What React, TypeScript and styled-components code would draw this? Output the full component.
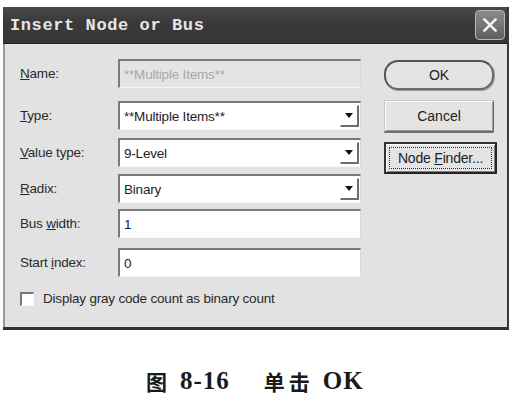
import React from "react";
import styled, { createGlobalStyle } from "styled-components";

const Global = createGlobalStyle`
  html, body { margin: 0; padding: 0; background: #ffffff; }
  body { width: 514px; height: 396px; overflow: hidden; font-family: "Liberation Sans", Arial, sans-serif; }
`;

const Page = styled.div`
  width: 514px;
  height: 396px;
  display: flex;
  flex-direction: column;
  background: #fff;
`;

const Window = styled.div`
  margin: 7px 0 0 3px;
  width: 506px;
  height: 323px;
  display: flex;
  flex-direction: column;
  box-sizing: border-box;
  border-right: 2px solid #3a3a3a;
  border-bottom: 3px solid #333;
  background: #e2e2e2;
`;

const TitleBar = styled.div`
  height: 36px;
  flex: none;
  display: flex;
  align-items: center;
  justify-content: space-between;
  padding: 0 2px 0 7px;
  background: linear-gradient(to bottom, #4a4a4a 0%, #3a3a3a 40%, #353535 100%);
  border-bottom: 1px solid #222;
`;

const Title = styled.span`
  font-family: "Liberation Mono", "Courier New", monospace;
  font-weight: bold;
  font-size: 17px;
  letter-spacing: 0.6px;
  color: #e6e6e6;
`;

const CloseButton = styled.div`
  width: 30px;
  height: 30px;
  box-sizing: border-box;
  border: 1px solid #b8b8b8;
  border-radius: 4px;
  background: linear-gradient(to bottom, #8a8a8a, #5e5e5e);
  display: flex;
  align-items: center;
  justify-content: center;
`;

const Body = styled.div`
  flex: 1;
  display: flex;
  border-left: 2px solid #9a9a9a;
  padding: 0 0 0 15px;
`;

const FormCol = styled.div`
  width: 345px;
  display: flex;
  flex-direction: column;
`;

const Row = styled.div<{ $mt: number }>`
  display: flex;
  align-items: center;
  height: 29px;
  margin-top: ${(p) => p.$mt}px;
`;

const Label = styled.span`
  width: 98px;
  flex: none;
  font-size: 13.5px;
  color: #2a2a2a;
  letter-spacing: -0.2px;
  u { text-decoration: underline; }
`;

const Field = styled.div<{ $disabled?: boolean }>`
  width: 243px;
  height: 29px;
  box-sizing: border-box;
  border-top: 2px solid #7a7a7a;
  border-left: 2px solid #7a7a7a;
  border-right: 1px solid #d8d8d8;
  border-bottom: 1px solid #f6f6f6;
  background: ${(p) => (p.$disabled ? "#e4e4e4" : "#ffffff")};
  display: flex;
  align-items: center;
  justify-content: space-between;
  padding-left: 4px;
  font-size: 13.5px;
  letter-spacing: -0.2px;
  color: ${(p) => (p.$disabled ? "#a8a8a8" : "#1e1e1e")};
`;

const DropButton = styled.div`
  width: 19px;
  height: 22px;
  margin-right: 1px;
  box-sizing: border-box;
  border-right: 2px solid #6e6e6e;
  border-bottom: 2px solid #6e6e6e;
  border-top: 1px solid #ffffff;
  border-left: 1px solid #ffffff;
  background: #ffffff;
  display: flex;
  align-items: center;
  justify-content: center;
`;

const Arrow = styled.div`
  width: 0;
  height: 0;
  border-left: 4px solid transparent;
  border-right: 4px solid transparent;
  border-top: 5px solid #111;
`;

const CheckRow = styled.div`
  display: flex;
  align-items: center;
  margin-top: 14px;
  font-size: 13.5px;
  letter-spacing: -0.2px;
  color: #2a2a2a;
`;

const CheckBox = styled.div`
  width: 14px;
  height: 14px;
  box-sizing: border-box;
  border-top: 2px solid #777;
  border-left: 2px solid #777;
  border-right: 1px solid #f4f4f4;
  border-bottom: 1px solid #f4f4f4;
  background: #ffffff;
  margin-right: 9px;
`;

const ButtonCol = styled.div`
  display: flex;
  flex-direction: column;
  gap: 10px;
  margin-left: 19px;
  padding-top: 16px;
`;

const Button = styled.div<{ $kind?: "default" | "focus" }>`
  width: ${(p) => (p.$kind === "focus" ? 113 : 110)}px;
  height: ${(p) => (p.$kind === "default" ? 30 : 32)}px;
  box-sizing: border-box;
  display: flex;
  align-items: center;
  justify-content: center;
  padding: ${(p) => (p.$kind === "focus" ? "3px" : "0")};
  font-size: 14px;
  color: #1c1c1c;
  background: #e4e4e4;
  border-radius: ${(p) => (p.$kind === "default" ? "14px" : "1px")};
  border: ${(p) =>
    p.$kind === "default"
      ? "2px solid #555"
      : p.$kind === "focus"
      ? "2px solid #333"
      : "1px solid #c8c8c8"};
  border-bottom-color: ${(p) => (p.$kind === "focus" ? "#222" : "#6a6a6a")};
  border-right-color: ${(p) => (p.$kind === "focus" ? "#222" : "#6a6a6a")};
  box-shadow: ${(p) =>
    p.$kind === "default"
      ? "1px 1px 0 #9a9a9a"
      : p.$kind === "focus"
      ? "inset 1px 1px 0 #fff, inset -1px -1px 0 #888"
      : "inset 1px 1px 0 #fafafa, inset -1px -1px 0 #9a9a9a, 0 1px 0 #777"};
`;

const FocusRing = styled.span`
  flex: 1;
  align-self: stretch;
  display: flex;
  align-items: center;
  justify-content: center;
  border: 1px dotted #333;
  letter-spacing: -0.2px;
`;

const Caption = styled.div`
  flex: 1;
  display: flex;
  align-items: flex-start;
  padding-left: 146px;
  padding-top: 37px;
  font-family: "Liberation Serif", "Noto Sans CJK SC", serif;
  font-weight: bold;
  font-size: 25px;
  line-height: 28px;
  color: #1a1a1a;
`;

const Cjk = styled.span<{ $ml?: number }>`
  font-family: "Noto Sans CJK SC", sans-serif;
  font-weight: bold;
  font-size: 21px;
  line-height: 28px;
  letter-spacing: 4px;
  margin-left: ${(p) => p.$ml ?? 0}px;
  margin-right: 9px;
`;

const Num = styled.span`
  letter-spacing: 1px;
`;

const rows: { label: React.ReactNode; value: string; mt: number; select?: boolean; disabled?: boolean }[] = [
  { label: <><u>N</u>ame:</>, value: "**Multiple Items**", mt: 15, disabled: true },
  { label: <><u>T</u>ype:</>, value: "**Multiple Items**", mt: 13, select: true },
  { label: <><u>V</u>alue type:</>, value: "9-Level", mt: 8, select: true },
  { label: <><u>R</u>adix:</>, value: "Binary", mt: 7, select: true },
  { label: <>Bus <u>w</u>idth:</>, value: "1", mt: 6 },
  { label: <>Start <u>i</u>ndex:</>, value: "0", mt: 10 },
];

export default function App() {
  return (
    <Page>
      <Global />
      <Window>
        <TitleBar>
          <Title>Insert Node or Bus</Title>
          <CloseButton>
            <svg width="18" height="18" viewBox="0 0 16 16">
              <path d="M3 3 L13 13 M13 3 L3 13" stroke="#f2f2f2" strokeWidth="2.4" strokeLinecap="round" />
            </svg>
          </CloseButton>
        </TitleBar>
        <Body>
          <FormCol>
            {rows.map((r, i) => (
              <Row key={i} $mt={r.mt}>
                <Label>{r.label}</Label>
                <Field $disabled={r.disabled}>
                  <span>{r.value}</span>
                  {r.select && (
                    <DropButton>
                      <Arrow />
                    </DropButton>
                  )}
                </Field>
              </Row>
            ))}
            <CheckRow>
              <CheckBox />
              <span>
                Display <u>g</u>ray code count as binary count
              </span>
            </CheckRow>
          </FormCol>
          <ButtonCol>
            <Button $kind="default">OK</Button>
            <Button>Cancel</Button>
            <Button $kind="focus">
              <FocusRing>
                <span>
                  Node <u>F</u>inder...
                </span>
              </FocusRing>
            </Button>
          </ButtonCol>
        </Body>
      </Window>
      <Caption>
        <Cjk>图</Cjk>
        <Num>8-16</Num>
        <Cjk $ml={34}>单击</Cjk>
        <Num>OK</Num>
      </Caption>
    </Page>
  );
}
